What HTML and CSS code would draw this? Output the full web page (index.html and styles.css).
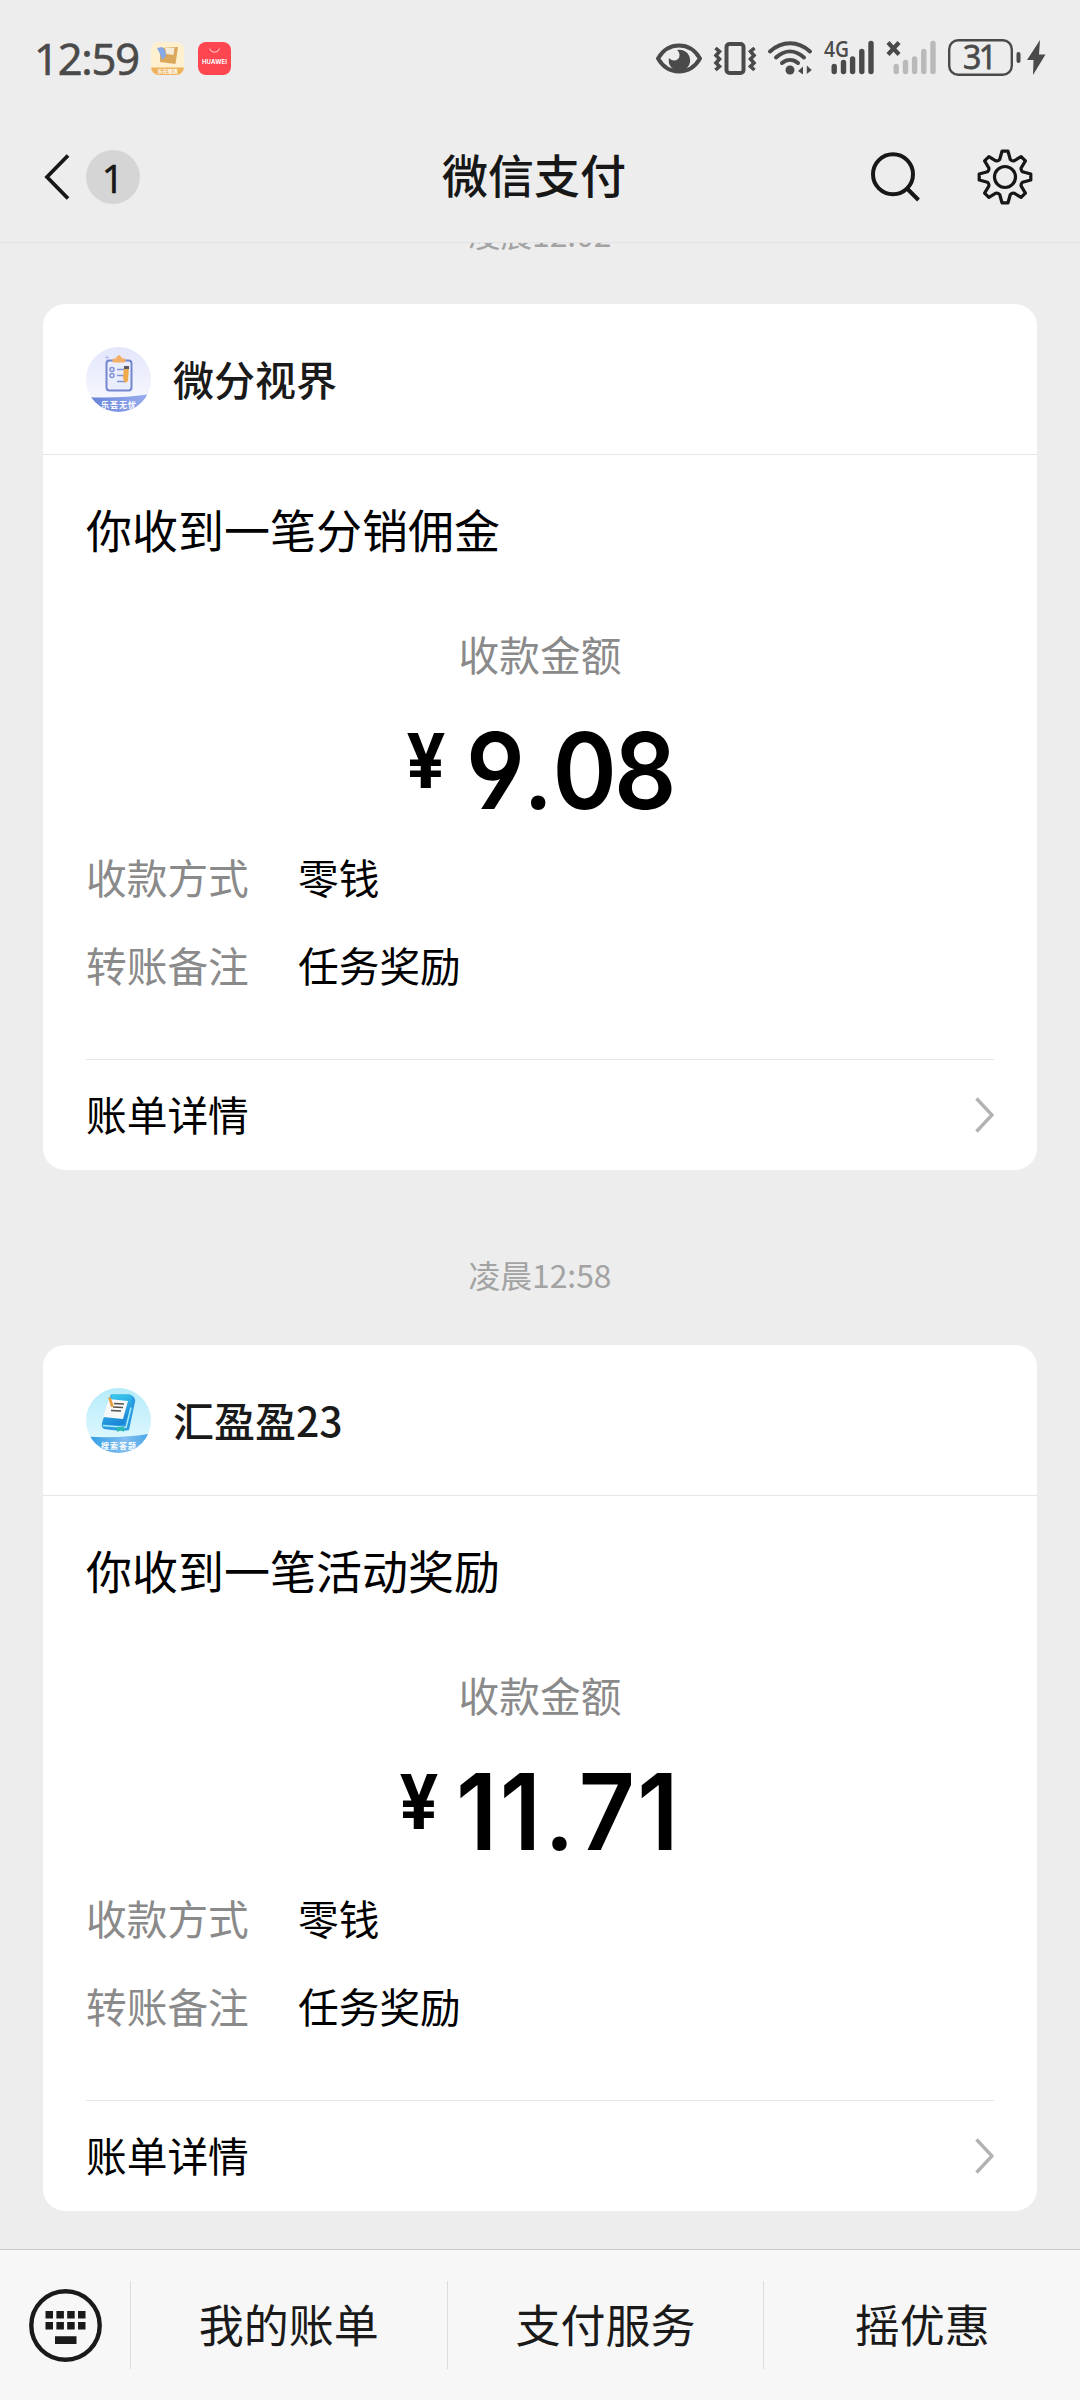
FILE: index.html
```html
<!DOCTYPE html>
<html lang="zh-CN">
<head>
<meta charset="utf-8">
<title>微信支付</title>
<link rel="stylesheet" href="styles.css">
</head>
<body>
<div class="screen">
  <header class="top">
    <div class="status">
      <span class="clock">12:59</span>
      <svg class="app-icon" width="33" height="33" viewBox="0 0 33 33">
        <defs><clipPath id="app"><rect width="33" height="33" rx="8"/></clipPath></defs>
        <g clip-path="url(#app)">
          <rect width="33" height="33" fill="#fff0d0"/>
          <path d="M9 6l18-1-2.500 17L9 20z" fill="#dba75a"/>
          <path d="M14 6l9.500 0-1 7-7-1z" fill="#f3ead8"/>
          <path d="M6 6l5-1 3 3 1 6-4 4-2-6z" fill="#86a8e6"/>
          <path d="M0 25.500h33V33H0z" fill="#eeb25c"/>
          <text x="16.500" y="31.200" class="app-caption">乐在赚钱</text>
        </g>
      </svg>
      <svg class="app-icon app-icon-store" width="33" height="33" viewBox="0 0 33 33">
        <rect width="33" height="33" rx="8" fill="#fe4650"/>
        <path d="M11.500 6.500a5.200 5.200 0 0 0 10 0" fill="none" stroke="#ffd5d5" stroke-width="1"/>
        <text x="16.500" y="21.500" class="store-caption" textLength="25">HUAWEI</text>
      </svg>
      <div class="indicators">
        <svg width="54" height="48" viewBox="654 34 54 48">
          <path d="M658 58.500C663 50 671 45.500 679 45.500S695 50 700 58.500C695 67 687 71.500 679 71.500S663 67 658 58.500z" fill="none" stroke="#4a4a4a" stroke-width="4" stroke-linejoin="round"/>
          <path d="M677 50a10.700 10.700 0 1 1-8 8c3 4 10 3 10.500-2 .2-3-1-5-2.500-6z" fill="#4a4a4a"/>
        </svg>
        <svg width="56" height="48" viewBox="708 34 56 48" fill="none" stroke="#4a4a4a">
          <rect x="726.500" y="44" width="17" height="29" rx="3" stroke-width="4"/>
          <path d="M715.500 48l4 3.500-3.500 4 3.500 3.500-3.500 4 3.500 3.500-4 3.500M754.500 48l-4 3.500 3.500 4-3.500 3.500 3.500 4-3.500 3.500 4 3.500" stroke-width="3.600"/>
        </svg>
        <svg width="56" height="48" viewBox="764 34 56 48">
          <g fill="none" stroke="#4a4a4a" stroke-width="4" stroke-linecap="round">
            <path d="M770 51.500c12-11 28-11 40 0M776 57.500c9-8 19-8 28 0M782 63c5-4 11-4 16 0"/>
          </g>
          <circle cx="790" cy="70" r="4.500" fill="#4a4a4a"/>
          <path d="M798 71l5-4.500v8zM811.800 70l-5-4.500v8.500z" fill="#4a4a4a"/>
        </svg>
        <svg width="62" height="48" viewBox="820 34 62 48">
          <text x="824" y="56.500" class="network" textLength="25" lengthAdjust="spacingAndGlyphs">4G</text>
          <path d="M834.200 66.500v5M843.500 62.500v9M852.600 59v12.500M861.800 51.500v20M871 43.500v28" stroke="#4a4a4a" stroke-width="5.400" stroke-linecap="round"/>
        </svg>
        <svg width="62" height="48" viewBox="882 34 62 48">
          <path d="M888 42.500l11 12M899 42.500l-11 12" stroke="#4a4a4a" stroke-width="4.200"/>
          <path d="M896.200 66.500v5M905.500 62.500v9M914.600 59v12.500M923.800 51.500v20M933 43.500v28" stroke="#b9b9b9" stroke-width="5.400" stroke-linecap="round"/>
        </svg>
        <svg width="106" height="48" viewBox="944 34 106 48">
          <rect x="949.200" y="40.200" width="62.600" height="34.600" rx="9" fill="none" stroke="#4a4a4a" stroke-width="2.400"/>
          <text x="980" y="69" class="battery" textLength="34">31</text>
          <rect x="1016.500" y="52" width="4" height="11" rx="2" fill="#4a4a4a"/>
          <path d="M1040 40l-13 20h6.500l-.5 15 12.500-20.500h-6.500z" fill="#4a4a4a"/>
        </svg>
      </div>
    </div>
    <nav class="nav">
      <div class="nav-left">
        <svg width="27" height="50" viewBox="0 0 27 50"><path d="M24 3.500L3 25l21 21.500" fill="none" stroke="#171717" stroke-width="3.800"/></svg>
        <span class="unread">1</span>
      </div>
      <h1 class="title">微信支付</h1>
      <div class="nav-right">
        <svg width="52" height="52" viewBox="0 0 52 52" fill="none" stroke="#171717" stroke-width="4"><circle cx="24" cy="23.300" r="20"/><path d="M38 37.500l11.500 11.500"/></svg>
        <svg width="58" height="58" viewBox="-29 -29 58 58" fill="none" stroke="#171717" stroke-width="3.200" stroke-linejoin="round">
          <circle r="10.500"/>
          <path d="M-3 -25.800H3L5.300 -17.500Q7 -15.600 9.200 -16.200L16.100 -20.400L20.400 -16.100L16.200 -9.200Q15.600 -7 17.500 -5.300L25.800 -3V3L17.500 5.300Q15.600 7 16.200 9.200L20.400 16.100L16.100 20.400L9.200 16.200Q7 15.600 5.300 17.500L3 25.800H-3L-5.300 17.500Q-7 15.600 -9.200 16.200L-16.100 20.400L-20.400 16.100L-16.200 9.200Q-15.600 7 -17.500 5.300L-25.800 3V-3L-17.500 -5.300Q-15.600 -7 -16.200 -9.200L-20.400 -16.100L-16.100 -20.400L-9.200 -16.200Q-7 -15.600 -5.300 -17.500Z"/>
        </svg>
      </div>
    </nav>
  </header>

  <main class="feed">
    <time class="stamp stamp-first">凌晨12:02</time>
    <article class="card">
      <div class="card-head">
        <svg width="65" height="65" viewBox="0 0 65 65">
          <defs>
            <clipPath id="disc"><circle cx="32.500" cy="32.500" r="32.500"/></clipPath>
            <linearGradient id="sky" x2="0" y2="1"><stop stop-color="#e3e6fb"/><stop offset="1" stop-color="#fafbff"/></linearGradient>
            <linearGradient id="band"><stop stop-color="#6381d6"/><stop offset="1" stop-color="#9daff0"/></linearGradient>
          </defs>
          <g clip-path="url(#disc)">
            <rect width="65" height="65" fill="url(#sky)"/>
            <rect x="20.500" y="13.500" width="25" height="30" rx="3" fill="#e9edfd" stroke="#7486cd" stroke-width="2"/>
            <path d="M27 15v-3h3q3-7 6 0h3v3z" fill="#f2b067" stroke="#f2b067"/>
            <g fill="none" stroke="#8292d4" stroke-width="1.500"><circle cx="26" cy="22.500" r="2"/><circle cx="26" cy="28.500" r="2"/><path d="M31 22.500h8M31 28.500h8M31 34.500h8"/></g>
            <path d="M38 20l5-1-1 15-3 2-2-5z" fill="#efaa4c"/><path d="M38 19h5v3h-5z" fill="#5a5666"/>
            <path d="M19 10.500h4M21 8.500v4" stroke="#b9b7ef"/>
            <path d="M0 50Q33 52 65 47V65H0z" fill="url(#band)"/>
            <text x="32.500" y="61.200" class="avatar-caption" textLength="35">乐荟无忧</text>
          </g>
        </svg>
        <h2 class="name">微分视界</h2>
      </div>
      <div class="card-body">
        <p class="headline">你收到一笔分销佣金</p>
        <p class="amount-label">收款金额</p>
        <p class="amount"><span class="yen">¥</span><span class="figure">9<span class="point">.</span>08</span></p>
        <dl class="details">
          <dt>收款方式</dt><dd>零钱</dd>
          <dt>转账备注</dt><dd>任务奖励</dd>
        </dl>
        <a class="bill">账单详情<svg width="19" height="36" viewBox="0 0 19 36"><path d="M1.500 1.500L17 18 1.500 34.500" fill="none" stroke="#b2b2b2" stroke-width="3.400"/></svg></a>
      </div>
    </article>

    <time class="stamp">凌晨12:58</time>
    <article class="card">
      <div class="card-head">
        <svg width="65" height="65" viewBox="0 0 65 65">
          <defs>
            <linearGradient id="aqua" x2="0" y2="1"><stop stop-color="#b5ebfa"/><stop offset="1" stop-color="#e8faff"/></linearGradient>
            <linearGradient id="book" x2=".4" y2="1"><stop stop-color="#3cd3ee"/><stop offset="1" stop-color="#1e86d8"/></linearGradient>
            <linearGradient id="band2"><stop stop-color="#2b9be2"/><stop offset=".6" stop-color="#82bdf0"/><stop offset="1" stop-color="#45a5e6"/></linearGradient>
          </defs>
          <g clip-path="url(#disc)">
            <rect width="65" height="65" fill="url(#aqua)"/>
            <path d="M25 6.500H44Q50 9 49 14L43 42Q38 44 18 41Q15 39 16 35z" fill="#2a9be0"/>
            <path d="M26 6.500H43Q47 8 46 12L39 36Q36 38 17 36z" fill="url(#book)"/>
            <path d="M17 37.500l23 2 5-20" fill="none" stroke="#a6e9f8" stroke-width="1.500"/>
            <path d="M23 11l19 2-5 18-20-2z" fill="#f7f8f8"/>
            <path d="M28 15.500l10 .5M27 19l10 .5M25 22.500l10 .5" stroke="#59514c" stroke-width="1.400"/>
            <path d="M22 9l3 1 3 9-3 0z" fill="#e9a03e"/>
            <path d="M31 39h7v5l-3-2-4 2z" fill="#2cb8aa"/>
            <path d="M0 48.500Q33 51 65 45.500V65H0z" fill="url(#band2)"/>
            <text x="32.500" y="60.500" class="avatar-caption" textLength="35">搜索答题</text>
          </g>
        </svg>
        <h2 class="name">汇盈盈23</h2>
      </div>
      <div class="card-body">
        <p class="headline">你收到一笔活动奖励</p>
        <p class="amount-label">收款金额</p>
        <p class="amount amount-ones"><span class="yen">¥</span><span class="figure">11<span class="point">.</span>71</span></p>
        <dl class="details">
          <dt>收款方式</dt><dd>零钱</dd>
          <dt>转账备注</dt><dd>任务奖励</dd>
        </dl>
        <a class="bill">账单详情<svg width="19" height="36" viewBox="0 0 19 36"><path d="M1.500 1.500L17 18 1.500 34.500" fill="none" stroke="#b2b2b2" stroke-width="3.400"/></svg></a>
      </div>
    </article>
  </main>

  <footer class="menu">
    <div class="keyboard">
      <svg width="73" height="73" viewBox="0 0 73 73" fill="#1a1a1a">
        <circle cx="36.500" cy="36.500" r="34.200" fill="none" stroke="#1a1a1a" stroke-width="4.400"/>
        <path d="M16.500 22h7.500v7.500h-7.500zM27.400 22h7.500v7.500h-7.500zM38.200 22h7.500v7.500h-7.500zM49 22h7.500v7.500h-7.500zM16.500 33h7.500v7.500h-7.500zM27.400 33h7.500v7.500h-7.500zM38.200 33h7.500v7.500h-7.500zM49 33h7.500v7.500h-7.500zM26 47.200h21.500v7.800H26z"/>
      </svg>
    </div>
    <span class="menu-item">我的账单</span>
    <span class="menu-item">支付服务</span>
    <span class="menu-item">摇优惠</span>
  </footer>
</div>
</body>
</html>
```

FILE: styles.css
```css
* { box-sizing: border-box; }
body, h1, h2, p, dl, dd { margin: 0; }

body {
  background: #ededed;
  color: #000;
  font-family: "Noto Sans CJK SC", sans-serif;
}

svg { display: block; flex: none; }

.screen {
  display: flex;
  flex-direction: column;
  width: 1080px;
  height: 2400px;
  overflow: hidden;
}

/* Status bar and navigation */
.top {
  flex: none;
  height: 243px;
  border-bottom: 1px solid #e2e2e2;
}

.status {
  display: flex;
  align-items: center;
  height: 116px;
  padding: 0 30px 0 34px;
}

.clock {
  width: 117px;
  padding-top: 1px;
  color: #4a4a4a;
  font: 500 43.500px/50px "Open Sans", sans-serif;
  letter-spacing: -1.2px;
  -webkit-text-stroke: .7px #4a4a4a;
}

.app-icon-store { margin-left: 14px; }
.app-caption { font-size: 5px; font-weight: 700; fill: #fff; text-anchor: middle; }
.store-caption { font: 700 6px Inter, sans-serif; fill: #fff; text-anchor: middle; }

.indicators { display: flex; margin-left: auto; }
.network { font: 600 21px "Open Sans", sans-serif; fill: #4a4a4a; }
.battery { font: 500 32px "Open Sans", sans-serif; fill: #4a4a4a; stroke: #4a4a4a; stroke-width: .8px; text-anchor: middle; }

.nav {
  display: grid;
  grid-template-columns: 1fr auto 1fr;
  align-items: center;
  height: 122px;
  padding: 0 46px 0 44px;
}

.nav-left { display: flex; align-items: center; gap: 15px; }

.unread {
  width: 54px;
  height: 54px;
  border-radius: 50%;
  background: #d5d5d5;
  color: #171717;
  font: 500 39px/55px "Open Sans", sans-serif;
  -webkit-text-stroke: .6px #171717;
  text-align: center;
}

.title {
  margin: 0 10px 8px 0;
  color: #171717;
  font-size: 46px;
  font-weight: 500;
  line-height: 60px;
}

.nav-right { display: flex; align-items: center; justify-content: flex-end; gap: 55px; }

/* Message feed */
.feed {
  flex: 1;
  min-height: 0;
  padding: 0 43px;
  overflow: hidden;
}

.stamp {
  display: block;
  height: 175px;
  padding-top: 81px;
  color: #a3a3a3;
  font-size: 31.800px;
  line-height: 46px;
  text-align: center;
}

.stamp-first { margin-top: -114px; }

.card {
  height: 866px;
  border-radius: 22px;
  background: #fff;
}

.card-head {
  display: flex;
  align-items: center;
  gap: 22px;
  height: 151px;
  padding: 0 43px;
  border-bottom: 1px solid #e6e6e6;
}

.name {
  margin-bottom: 3px;
  color: #1a1a1a;
  font-size: 41px;
  font-weight: 500;
  line-height: 60px;
}

.card-body { padding: 43px 43px 0; }
.headline { font-size: 46px; line-height: 60px; }

.amount-label {
  margin-top: 66px;
  color: #8a8a8a;
  font-size: 40.700px;
  line-height: 60px;
  text-align: center;
}

.amount {
  display: flex;
  justify-content: center;
  height: 163px;
  padding-top: 34px;
  font-family: Inter, sans-serif;
  font-weight: 600;
  font-feature-settings: "ss01";
  transform: scaleX(.92);
}

.yen { margin-right: 22px; font-size: 75px; font-weight: 700; line-height: 86px; }
.figure { font-size: 106px; line-height: 106px; letter-spacing: -3px; }
.point { margin: 0 3px; font-family: Roboto, sans-serif; }

.amount-ones .yen { margin-right: 19px; }
.amount-ones .figure { letter-spacing: 2.500px; }

.details {
  display: grid;
  grid-template-columns: 212px 1fr;
  row-gap: 28px;
  font-size: 40.700px;
  line-height: 60px;
}

.details dt { color: #8a8a8a; }

.bill {
  display: flex;
  align-items: center;
  justify-content: space-between;
  height: 109px;
  margin-top: 64px;
  padding-bottom: 1px;
  border-top: 1px solid #e4e4e4;
  font-size: 40.700px;
  line-height: 56px;
}

.bill svg { margin-top: 2px; }

.avatar-caption { font-size: 8px; font-weight: 700; fill: #fff; text-anchor: middle; }

/* Bottom menu */
.menu {
  display: flex;
  flex: none;
  align-items: center;
  height: 151px;
  border-top: 1px solid #c8c8c8;
  background: #f7f7f7;
}

.keyboard { width: 130px; padding-left: 29px; }

.menu-item {
  flex: 1;
  height: 88px;
  border-left: 1px solid #dcdcdc;
  color: #1a1a1a;
  font-size: 45px;
  line-height: 86px;
  text-align: center;
}
```
